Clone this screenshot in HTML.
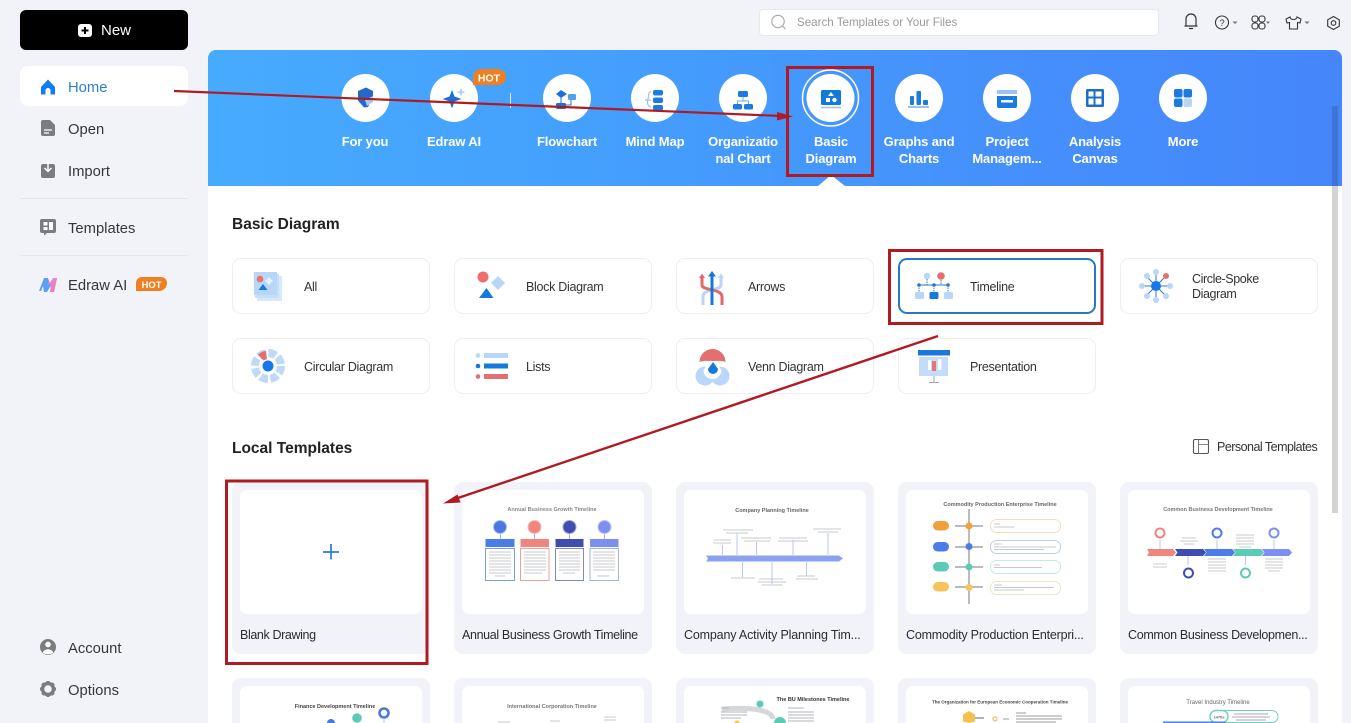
<!DOCTYPE html>
<html lang="en">
<head>
<meta charset="utf-8">
<title>Edraw Home</title>
<style>
html,body{margin:0;padding:0;width:1351px;height:723px;overflow:hidden;background:#f1f3f9;font-family:"Liberation Sans",sans-serif;color:#2b2b30}
*{box-sizing:border-box}
#root{position:relative;width:1351px;height:723px;overflow:hidden;background:#f1f3f9}
.a{position:absolute}
.new{left:20px;top:10px;width:168px;height:40px;background:#000;border-radius:6px;color:#fff;font-size:15px;line-height:41px;padding-left:81px}
.homebg{left:20px;top:66px;width:168px;height:40px;background:#fff;border-radius:8px}
.nav{left:68px;font-size:14.8px;line-height:20px;color:#36363c;white-space:nowrap}
.hr{left:20px;width:168px;height:1px;background:#e4e6ec}
.panel{left:208px;top:50px;width:1134px;height:673px;background:#fff;border-radius:8px 8px 0 0}
.banner{left:208px;top:50px;width:1134px;height:136px;border-radius:8px 8px 0 0;background:linear-gradient(90deg,#47abfd 0%,#449ffd 35%,#4590fc 70%,#4586fb 100%)}
.lbl{width:88px;text-align:center;color:#fff;font-size:13px;font-weight:bold;line-height:17px;top:133px;white-space:nowrap;letter-spacing:-.15px}
.h{left:232px;font-size:15.5px;font-weight:bold;color:#222;line-height:20px;white-space:nowrap}
.c{width:198px;height:56px;background:#fff;border:1px solid #eceef2;border-radius:9px}
.ct{font-size:12.5px;line-height:15px;color:#333;white-space:nowrap;letter-spacing:-.3px}
.t{width:198px;height:172px;background:#f1f3f9;border-radius:9px}
.th{width:182px;height:124px;background:#fff;border-radius:7px}
.t2{width:198px;height:45px;top:678px;background:#f1f3f9;border-radius:9px 9px 0 0}
.th2{width:182px;height:37px;top:686px;background:#fff;border-radius:7px 7px 0 0}
.tl{font-size:12.5px;line-height:16px;color:#2b2b30;white-space:nowrap;top:627px}
.search{left:759px;top:9px;width:400px;height:27px;background:#fff;border:1px solid #e6e8ee;border-radius:4px;font-size:11.6px;line-height:25px;color:#9a9a9f;padding-left:37px}
svg.o{position:absolute;left:0;top:0;width:1351px;height:723px;overflow:hidden}
.soft{filter:blur(.3px)}
</style>
</head>
<body>
<div id="root">
<div class="a new">New</div>
<div class="a homebg"></div>
<div class="a nav" style="top:78px;color:#2f80c8">Home</div>
<div class="a nav" style="top:120px">Open</div>
<div class="a nav" style="top:162px">Import</div>
<div class="a hr" style="top:198px"></div>
<div class="a nav" style="top:219px">Templates</div>
<div class="a hr" style="top:255px"></div>
<div class="a nav" style="top:276px">Edraw AI</div>
<div class="a nav" style="top:639px">Account</div>
<div class="a nav" style="top:681px">Options</div>

<div class="a search">Search Templates or Your Files</div>

<div class="a panel"></div>
<div class="a banner"></div>
<div class="a" style="left:1332px;top:186px;width:6px;height:327px;background:#d3d3d3"></div>
<div class="a" style="left:1332px;top:106px;width:6px;height:80px;background:#3f74d6"></div>

<div class="a lbl" style="left:321px">For you</div>
<div class="a lbl" style="left:410px">Edraw AI</div>
<div class="a lbl" style="left:523px">Flowchart</div>
<div class="a lbl" style="left:611px">Mind Map</div>
<div class="a lbl" style="left:699px">Organizatio<br>nal Chart</div>
<div class="a lbl" style="left:787px">Basic<br>Diagram</div>
<div class="a lbl" style="left:875px">Graphs and<br>Charts</div>
<div class="a lbl" style="left:963px">Project<br>Managem...</div>
<div class="a lbl" style="left:1051px">Analysis<br>Canvas</div>
<div class="a lbl" style="left:1139px">More</div>

<div class="a h" style="top:215px">Basic Diagram</div>
<div class="a c" style="left:232px;top:258px"></div>
<div class="a c" style="left:454px;top:258px"></div>
<div class="a c" style="left:676px;top:258px"></div>
<div class="a c" style="left:898px;top:258px;border:2px solid #2a78c0"></div>
<div class="a c" style="left:1120px;top:258px"></div>
<div class="a c" style="left:232px;top:338px"></div>
<div class="a c" style="left:454px;top:338px"></div>
<div class="a c" style="left:676px;top:338px"></div>
<div class="a c" style="left:898px;top:338px"></div>
<div class="a ct" style="left:304px;top:280px">All</div>
<div class="a ct" style="left:526px;top:280px">Block Diagram</div>
<div class="a ct" style="left:748px;top:280px">Arrows</div>
<div class="a ct" style="left:970px;top:280px">Timeline</div>
<div class="a ct" style="left:1192px;top:272px;letter-spacing:-.4px">Circle-Spoke<br>Diagram</div>
<div class="a ct" style="left:304px;top:360px">Circular Diagram</div>
<div class="a ct" style="left:526px;top:360px">Lists</div>
<div class="a ct" style="left:748px;top:360px">Venn Diagram</div>
<div class="a ct" style="left:970px;top:360px">Presentation</div>

<div class="a h" style="top:439px">Local Templates</div>
<div class="a ct" style="left:1217px;top:440px;letter-spacing:-.52px">Personal Templates</div>

<div class="a t" style="left:232px;top:482px"></div>
<div class="a t" style="left:454px;top:482px"></div>
<div class="a t" style="left:676px;top:482px"></div>
<div class="a t" style="left:898px;top:482px"></div>
<div class="a t" style="left:1120px;top:482px"></div>
<div class="a th" style="left:240px;top:490px"></div>
<div class="a th" style="left:462px;top:490px"></div>
<div class="a th" style="left:684px;top:490px"></div>
<div class="a th" style="left:906px;top:490px"></div>
<div class="a th" style="left:1128px;top:490px"></div>
<div class="a tl" style="left:240px;letter-spacing:-.38px">Blank Drawing</div>
<div class="a tl" style="left:462px;letter-spacing:-.36px">Annual Business Growth Timeline</div>
<div class="a tl" style="left:684px;letter-spacing:-.17px">Company Activity Planning Tim...</div>
<div class="a tl" style="left:906px;letter-spacing:-.2px">Commodity Production Enterpri...</div>
<div class="a tl" style="left:1128px;letter-spacing:-.33px">Common Business Developmen...</div>

<div class="a t2" style="left:232px"></div>
<div class="a t2" style="left:454px"></div>
<div class="a t2" style="left:676px"></div>
<div class="a t2" style="left:898px"></div>
<div class="a t2" style="left:1120px"></div>
<div class="a th2" style="left:240px"></div>
<div class="a th2" style="left:462px"></div>
<div class="a th2" style="left:684px"></div>
<div class="a th2" style="left:906px"></div>
<div class="a th2" style="left:1128px"></div>

<svg class="o" viewBox="0 0 1351 723" xmlns="http://www.w3.org/2000/svg" font-family="Liberation Sans, sans-serif">
<!-- new plus -->
<rect x="78" y="24" width="14" height="13" rx="3" fill="#fff"/>
<path d="M85 27v7M81.500 30.500h7" stroke="#000" stroke-width="2"/>
<!-- sidebar icons -->
<path d="M41 87l7-7.500 7 7.500v7.500h-4.500v-4a2.500 2.500 0 0 0-5 0v4H41z" fill="#0f7ef0"/>
<path d="M41 122a2 2 0 0 1 2-2h7l5 5v9a2 2 0 0 1-2 2H43a2 2 0 0 1-2-2z" fill="#7b7b80"/>
<path d="M44 130h8M44 133h5" stroke="#fff" stroke-width="1.300"/>
<path d="M41 166a2 2 0 0 1 2-2h10a2 2 0 0 1 2 2v10a2 2 0 0 1-2 2H43a2 2 0 0 1-2-2z" fill="#7b7b80"/>
<path d="M48 162v9M44.500 168l3.500 3.500 3.500-3.500" stroke="#fff" stroke-width="1.500" fill="none"/>
<path d="M42 219h12a2 2 0 0 1 2 2v10a2 2 0 0 1-2 2h-7l-3 2.500V233h-2a2 2 0 0 1-2-2v-10a2 2 0 0 1 2-2z" fill="#7b7b80"/>
<path d="M43.500 222h4v3.500h-4zM49 222h4v8h-4v-3.500zM43.500 227h4v3h-4z" fill="#fff"/>
<path d="M39 291l5-13h4l1 7 4-7h4l-3 14h-4l1-7-4 7h-3l-1-6-2 5z" fill="#5aa0f5"/>
<path d="M48 278l1 7 4-7h4l-3 14h-4l1-7" fill="#ef7fc0"/>
<path d="M136 283a6 6 0 0 1 6-6h19a6 6 0 0 1 6 6v0a8 8 0 0 1-8 8h-23z" fill="#f0801f"/>
<text x="151.500" y="288" font-size="9.500" font-weight="bold" fill="#fff" text-anchor="middle">HOT</text>
<circle cx="48" cy="647" r="8" fill="#7b7b80"/>
<circle cx="48" cy="644.500" r="2.800" fill="#fff"/>
<path d="M42.800 652.500a5.300 4 0 0 1 10.400 0a8 8 0 0 1-10.400 0z" fill="#fff"/>
<circle cx="48" cy="689" r="5.500" fill="none" stroke="#7b7b80" stroke-width="3.500"/>
<path d="M48 681v3M48 694v3M40 689h3M53 689h3M42.300 683.300l2.200 2.200M51.500 692.500l2.200 2.200M42.300 694.700l2.200-2.200M51.500 685.500l2.200-2.200" stroke="#7b7b80" stroke-width="3"/>

<!-- top icons -->
<circle cx="778" cy="21.500" r="6.200" fill="none" stroke="#a6a6aa" stroke-width="1.100"/>
<path d="M782.500 26l3 3" stroke="#a6a6aa" stroke-width="1.100"/>
<path d="M1186 26v-7a5 5 0 0 1 10 0v7zM1184.500 26h13M1189 28.500h4" fill="none" stroke="#333" stroke-width="1.200"/>
<circle cx="1222" cy="22.500" r="6.500" fill="none" stroke="#333" stroke-width="1.100"/>
<text x="1222" y="26" font-size="9.500" text-anchor="middle" fill="#333">?</text>
<path d="M1232.500 21.500h5l-2.500 2.500zM1266 21.500h4l-2 2.500zM1304.500 21.500h5l-2.500 2.500z" fill="#777"/>
<g fill="none" stroke="#333" stroke-width="1.100"><rect x="1252" y="16" width="6" height="6" rx="2.500"/><rect x="1259" y="16" width="6" height="6" rx="2.500"/><rect x="1252" y="23" width="6" height="6" rx="2.500"/><rect x="1259" y="23" width="6" height="6" rx="2.500"/>
<path d="M1290 17l-4 2 1 4 2.500-.5V29h8v-6.500l2.500.5 1-4-4-2a3.500 2.500 0 0 1-7 0z"/>
<path d="M1333.500 16.500l5.800 3.300v6.400l-5.800 3.300-5.800-3.300v-6.400z"/><circle cx="1333.500" cy="23" r="2.300"/></g>

<!-- banner circles -->
<g fill="#fff"><circle cx="365.500" cy="98" r="24"/><circle cx="454" cy="98" r="24"/><circle cx="567" cy="98" r="24"/><circle cx="655" cy="98" r="24"/><circle cx="743" cy="98" r="24"/><circle cx="830.500" cy="98" r="24"/><circle cx="919" cy="98" r="24"/><circle cx="1007" cy="98" r="24"/><circle cx="1095" cy="98" r="24"/><circle cx="1183" cy="98" r="24"/></g>
<circle cx="830.500" cy="98" r="28" fill="none" stroke="#fff" stroke-width="1.500"/>
<path d="M818 186l13-11 14 11z" fill="#fff"/>
<path d="M510.500 93v15" stroke="#dbe9ff" stroke-width="1"/>
<path d="M481 69h17a8 8 0 0 1 8 8v0a8 8 0 0 1-8 8h-25v-8a8 8 0 0 1 8-8z" fill="#f0801f"/>
<text x="489" y="81.500" font-size="10.500" font-weight="bold" fill="#fff" text-anchor="middle">HOT</text>
<!-- banner icon glyphs -->
<path d="M358 91l8-3.500 7 3.500v6l-5 10-4 .5-6-7z" fill="#2468c8"/>
<path d="M365 100l8-4v6l-6 4z" fill="#a9c9f5"/>
<path d="M452 90l2.500 6.500 7 2.500-7 2.500-2.500 7-2.500-7-7-2.500 7-2.500z" fill="#1c6fd6"/>
<path d="M461 88l1.200 3 3 1.200-3 1.200-1.200 3-1.200-3-3-1.200 3-1.200z" fill="#b4cdf2"/>
<path d="M561 90l6 4-6 4-5-4z" fill="#1c6fd6"/><rect x="568" y="94" width="8" height="6" rx="1.500" fill="#52a0ea"/><rect x="556" y="103" width="10" height="6" rx="1.500" fill="#1c6fd6"/><path d="M561 98v5M566 105h5v-5" stroke="#1c6fd6" fill="none"/>
<rect x="653" y="90" width="10" height="5.500" rx="2" fill="#1c7be0"/><rect x="653" y="97.500" width="10" height="5.500" rx="2" fill="#1c7be0"/><rect x="653" y="105" width="10" height="5.500" rx="2" fill="#1c7be0"/>
<path d="M651 92c-3 0-2 4-3 7-1 3-1 7 3 8M645 100h6" fill="none" stroke="#9cc3ef" stroke-width="1.200"/>
<rect x="738" y="91" width="10" height="6" rx="1.500" fill="#1c7be0"/><rect x="733" y="104" width="9" height="5.500" rx="1.500" fill="#1c7be0"/><rect x="744" y="104" width="9" height="5.500" rx="1.500" fill="#1c7be0"/><path d="M743 97v4M737.500 104v-3h11v3" fill="none" stroke="#6fa9e6"/>
<rect x="821" y="90" width="20" height="15" rx="1.500" fill="#1479d8"/><path d="M831 92l3 4h-6z" fill="#fff"/><rect x="826" y="98" width="4" height="4" fill="#fff"/><circle cx="834.500" cy="100" r="2.200" fill="#fff"/><path d="M821 107.500h20" stroke="#9cc3ef" stroke-width="1.500"/>
<rect x="910" y="96" width="4" height="9" rx="1" fill="#1c7be0"/><rect x="916.500" y="91" width="4.500" height="14" rx="1" fill="#1c7be0"/><rect x="923" y="100" width="5" height="5" rx="1" fill="#1c7be0"/><path d="M908 107h21" stroke="#9cc3ef" stroke-width="2"/>
<rect x="997" y="90" width="20" height="4" fill="#9cc3ef"/><path d="M997 96h20v10a2 2 0 0 1-2 2h-16a2 2 0 0 1-2-2z" fill="#1c7be0"/><rect x="1001" y="100" width="12" height="2.500" fill="#fff"/>
<rect x="1086" y="89" width="18" height="18" rx="1.500" fill="#1c6fc8"/><path d="M1088.500 91.500h5v5h-5zM1095.500 91.500h6v5h-6zM1088.500 98.500h5v6h-5zM1095.500 98.500h6v6h-6z" fill="#fff"/>
<rect x="1174" y="89" width="8.500" height="8.500" rx="2" fill="#1c7be0"/><rect x="1183.500" y="89" width="8.500" height="8.500" rx="2" fill="#1c7be0"/><rect x="1174" y="98.500" width="8.500" height="8.500" rx="2" fill="#1c7be0"/><rect x="1183.500" y="98.500" width="8.500" height="8.500" rx="2" fill="#b9d6f5"/>

<!-- category icons -->
<rect x="257" y="276" width="25" height="25" fill="#d8e8fb"/><rect x="255" y="274" width="24" height="24" fill="#c5def9"/>
<rect x="254" y="272" width="23" height="23" fill="#b8d6f8"/><circle cx="260" cy="279" r="3.300" fill="#ea7272"/><path d="M269 277l4 4-4 4-4-4z" fill="#e6f1fd"/><path d="M263 284l4.500 6h-9z" fill="#1478dc"/>
<circle cx="483" cy="277" r="5.500" fill="#ee6e6e"/><path d="M498 276l7 7-7 7-7-7z" fill="#b9d6f8"/><path d="M486.500 288l7 10h-14.500z" fill="#1478dc"/>
<path d="M721 278v7c0 6-18 3-18 12v8" fill="none" stroke="#b9d6f8" stroke-width="3"/><path d="M718 278l3-4.500 3 4.500z" fill="#b9d6f8"/>
<path d="M702 278v7c0 6 20 3 20 12v8" fill="none" stroke="#e06a6a" stroke-width="3"/><path d="M699 278l3-4.500 3 4.500z" fill="#e06a6a"/>
<path d="M712 271l4 5.500h-2.500V305h-3V276.500H708z" fill="#1478dc"/>
<circle cx="927" cy="276" r="3.300" fill="#b9d6f8"/><circle cx="941" cy="276" r="3.800" fill="#e56f6f"/><path d="M919 285h29" stroke="#2a78c0"/><path d="M927 279v6M941 280v5M919 285v7M934 285v7M948 285v7" stroke="#2a78c0" stroke-dasharray="1.500 1"/><g fill="#2a78c0"><circle cx="919" cy="285" r="1.800"/><circle cx="934" cy="285" r="1.800"/><circle cx="948" cy="285" r="1.800"/></g><rect x="915" y="292" width="9" height="7" rx="1.500" fill="#b9d6f8"/><rect x="929.500" y="292" width="9" height="7" rx="1.500" fill="#1478dc"/><rect x="944" y="292" width="9" height="7" rx="1.500" fill="#b9d6f8"/>
<g stroke="#2a78c0" stroke-width="1"><path d="M1156 274v24M1144 286h24M1148 278l16 16M1164 278l-16 16"/></g><circle cx="1156" cy="286" r="5" fill="#1478ec"/>
<g fill="#b9d6f8"><circle cx="1156" cy="272" r="3"/><circle cx="1147" cy="276" r="3"/><circle cx="1142" cy="286" r="3"/><circle cx="1170" cy="286" r="3"/><circle cx="1147" cy="296" r="3"/><circle cx="1156" cy="300" r="3"/><circle cx="1166" cy="296" r="3"/></g><circle cx="1166" cy="276" r="3" fill="#e56f6f"/>
<circle cx="268" cy="366" r="13" fill="none" stroke="#c0d9f8" stroke-width="8" stroke-dasharray="7.700 2.510"/><path d="M258 354.500a15 15 0 0 1 8-3.500l1 8-3.500 1.500z" fill="#e56f6f"/><circle cx="268" cy="366" r="5.500" fill="#1478ec"/>
<circle cx="478" cy="355.500" r="2.300" fill="#b9d6f8"/><rect x="484" y="353" width="24" height="5" fill="#b9d6f8"/><circle cx="478" cy="366" r="2.300" fill="#1478dc"/><rect x="484" y="363.500" width="24" height="5" fill="#1478dc"/><circle cx="478" cy="376.500" r="2.300" fill="#e56f6f"/><rect x="484" y="374" width="24" height="5" fill="#e56f6f"/>
<circle cx="705" cy="376" r="9.500" fill="#bad7f9"/><circle cx="720" cy="376" r="9.500" fill="#bad7f9"/>
<path d="M712.500 358l9 12a9 9 0 0 1-9 9 9 9 0 0 1-9-9z" fill="#fff"/>
<path d="M699.500 362a13 13 0 0 1 26 0c-4-1.500-8-1-13-1s-9-.5-13 1z" fill="#e56f6f"/><path d="M713 362l5 7a5 5 0 1 1-10 0z" fill="#1478dc"/>
<rect x="918" y="350" width="32" height="5.500" fill="#1b78d8"/><rect x="919" y="357" width="29" height="19" fill="#c2dcf9"/><rect x="928" y="360" width="3" height="10" fill="#fff"/><rect x="932" y="361" width="4" height="10" fill="#e67676"/><rect x="938" y="359" width="3.500" height="11" fill="#fff"/><path d="M934 376v6M929 382.500h10" stroke="#aaa"/>

<!-- personal templates icon -->
<rect x="1193.500" y="439.500" width="15" height="14" rx="1.500" fill="none" stroke="#555" stroke-width="1.100"/><path d="M1198.500 444.500h10" stroke="#888" stroke-width="1"/><path d="M1198.500 439.500v14" stroke="#777"/>
<!-- blank plus -->
<path d="M331 544v15.500M323 552h16" stroke="#2a7fc4" stroke-width="1.700"/>

<g class="soft">
<!-- thumb 1 -->
<text x="552" y="511" font-size="5.500" font-weight="bold" fill="#888" text-anchor="middle">Annual Business Growth Timeline</text>
<g stroke-width="1">
<path d="M500.500 534v5M534.500 534v5M569.500 534v5M604.500 534v5" stroke="#9fb4e8"/>
<circle cx="500" cy="527" r="6.500" fill="#4a77e0" stroke="#a8c0f2"/><circle cx="534.500" cy="527" r="6.500" fill="#f0847e" stroke="#f8bdb8"/><circle cx="569.500" cy="527" r="6.500" fill="#3f4db0" stroke="#9aa2dc"/><circle cx="604.500" cy="527" r="6.500" fill="#7d8ff0" stroke="#bcc5f6"/>
<rect x="485.500" y="539" width="29" height="8" fill="#4a7de8"/><rect x="520.500" y="539" width="28.500" height="8" fill="#f0847e"/><rect x="555.500" y="539" width="28" height="8" fill="#3f4db0"/><rect x="590" y="539" width="28.500" height="8" fill="#7d8ff0"/>
<rect x="485.500" y="548.500" width="29" height="32" fill="#fff" stroke="#7d9fd8"/><rect x="520.500" y="548.500" width="28.500" height="32" fill="#fff" stroke="#f0a09a"/><rect x="555.500" y="548.500" width="28" height="32" fill="#fff" stroke="#7f88c4"/><rect x="590" y="548.500" width="28.500" height="32" fill="#fff" stroke="#a0b0e8"/>
</g>
<path d="M489 552h22M489 555h22M489 558h22M489 561h22M489 564h22M489 567h22M489 570h22M489 573h22M495 576h10M524 552h22M524 555h22M524 558h22M524 561h22M524 564h22M524 567h22M524 570h22M524 573h18M559 552h21M559 555h21M559 558h21M559 561h21M559 564h21M559 567h21M559 570h21M563 573h12M593 552h22M593 555h22M593 558h22M593 561h22M593 564h22M593 567h22M593 570h22M597 576h12" stroke="#c6c8ce" stroke-width="1"/>
<!-- thumb 2 -->
<text x="772" y="512" font-size="5.500" font-weight="bold" fill="#666" text-anchor="middle">Company Planning Timeline</text>
<path d="M706 555.500h133l4 3-4 3H706l2-3z" fill="#8ba3ee"/>
<path d="M722.500 545v10M737 533v22M756.500 542v13M793 540v15M828 533v22M742.500 562v15M772 562v22M806.500 562v14" stroke="#b9c7ee" stroke-width="1"/>
<path d="M714 540h17M713 543h18M723 530h30M726 533h22M741 538h30M744 541h26M779 538h28M778 541h30M813 529h28M818 532h20M731 578h24M759 579h24M758 582h28M762 585h20M797 576h18M796 579h22" stroke="#c6c8ce" stroke-width="1"/>
<!-- thumb 3 -->
<text x="1000" y="506" font-size="5.500" font-weight="bold" fill="#666" text-anchor="middle">Commodity Production Enterprise Timeline</text>
<path d="M969 509v95" stroke="#777" stroke-width="1"/>
<path d="M955 526h28M955 547h28M955 567h28M955 587h28" stroke="#777" stroke-width="1"/>
<rect x="933" y="521" width="16" height="9.500" rx="4.700" fill="#f0a03a"/><rect x="933" y="542" width="16" height="9.500" rx="4.700" fill="#4a7de8"/><rect x="933" y="562" width="16" height="9.500" rx="4.700" fill="#5ccab5"/><rect x="933" y="582" width="16" height="9.500" rx="4.700" fill="#f4c55c"/>
<circle cx="969" cy="526" r="3.500" fill="#f0a03a"/><circle cx="969" cy="546.500" r="3.500" fill="#4a7de8"/><circle cx="969" cy="567" r="3.500" fill="#5ccab5"/><circle cx="969" cy="587.500" r="3.500" fill="#f4c55c"/>
<g fill="#fff" stroke-width="1"><rect x="990.500" y="519.500" width="70" height="13" rx="6" stroke="#f4dcc0"/><rect x="990.500" y="540.500" width="70" height="13" rx="6" stroke="#bccdf2"/><rect x="990.500" y="560.500" width="70" height="13" rx="6" stroke="#c0ece3"/><rect x="990.500" y="581.500" width="70" height="13" rx="6" stroke="#f4e4c8"/></g>
<path d="M994 524h6M994 527h20M994 544h8M994 547h62M994 549.500h50M994 565h6M994 567.500h48M994 585h8M994 587.500h60M994 590h30" stroke="#c6c8ce" stroke-width="1"/>
<!-- thumb 4 -->
<text x="1218" y="511" font-size="5.500" font-weight="bold" fill="#777" text-anchor="middle">Common Business Development Timeline</text>
<path d="M1147 549h26l3 3.500-3 3.500h-26l2-3.500z" fill="#f0847e"/><path d="M1175 549h28l3 3.500-3 3.500h-28l2.500-3.500z" fill="#3f4db0"/><path d="M1204 549h28l3 3.500-3 3.500h-28l2.500-3.500z" fill="#4a7de8"/><path d="M1233 549h28l3 3.500-3 3.500h-28l2.500-3.500z" fill="#5ccab5"/><path d="M1262 549h27l3 3.500-3 3.500h-27l2.500-3.500z" fill="#7d8ff0"/>
<path d="M1160 540v9M1188 556v9M1217 540v9M1245.500 556v9M1274 540v9" stroke="#b9c7ee"/>
<g fill="#fff" stroke-width="2"><circle cx="1160" cy="533" r="4.500" stroke="#f0847e"/><circle cx="1188.500" cy="573" r="4.500" stroke="#3f4db0"/><circle cx="1217" cy="533" r="4.500" stroke="#4a7de8"/><circle cx="1245.500" cy="573" r="4.500" stroke="#5ccab5"/><circle cx="1274" cy="533" r="4.500" stroke="#7d8ff0"/></g>
<path d="M1182 538h14M1180 541h18M1184 544h10M1236 535h18M1236 538h18M1236 541h18M1236 544h18M1239 547h12M1153 564h14M1153 567h14M1208 559h18M1208 562h18M1208 565h18M1208 568h18M1208 571h18M1265 559h18M1265 562h18M1265 565h18M1265 568h18M1268 571h12" stroke="#c6c8ce" stroke-width="1"/>

<!-- row 2 -->
<text x="335" y="708" font-size="5.500" font-weight="bold" fill="#444" text-anchor="middle">Finance Development Timeline</text>
<circle cx="384" cy="713" r="4.500" fill="#fff" stroke="#4a77e0" stroke-width="2.500"/><path d="M384 718v5" stroke="#a8c0f2"/>
<circle cx="357" cy="718" r="4.800" fill="#5ccab5"/><path d="M327 723a4 4 0 0 1 8 0z" fill="#4a77e0"/>
<text x="552" y="708" font-size="5.500" font-weight="bold" fill="#777" text-anchor="middle">International Corporation Timeline</text>
<path d="M498 722h12M550 721h10M604 717h12M604 720h12" stroke="#c6c8ce"/>
<text x="813" y="701" font-size="5.500" font-weight="bold" fill="#333" text-anchor="middle">The BU Milestones Timeline</text>
<path d="M722 709c30-2 50 1 51 10" fill="none" stroke="#d5d7db" stroke-width="5"/><circle cx="760" cy="704" r="3.500" fill="#5ccab5"/><path d="M774 723a6 6 0 0 1 12 0z" fill="#5ccab5"/><path d="M734.500 723a2.500 2.500 0 0 1 5 0z" fill="#f4c55c"/>
<path d="M721 708h8M721 712h26M721 715h26M721 718h20M788 708h16M788 712h26M788 715h26M788 718h26M788 721h26" stroke="#b3b5bc"/>
<text x="1000" y="703.500" font-size="4.500" font-weight="bold" fill="#444" text-anchor="middle">The Organization for European Economic Cooperation Timeline</text>
<path d="M969 711l6 3.500v7l-6 1.500-6-1.500v-7z" fill="#f4c04e"/><path d="M975 718h9" stroke="#666"/><circle cx="995" cy="719" r="2" fill="#fff" stroke="#f0b040"/>
<path d="M1003 719h6M1016 713h10M1016 716h46M1016 719h46M1016 722h40" stroke="#9a9ca2"/>
<text x="1218" y="704" font-size="6" fill="#666" text-anchor="middle">Travel Industry Timeline</text>
<rect x="1210" y="710.500" width="68" height="12" rx="6" fill="none" stroke="#6fd0c0"/><rect x="1210" y="710.500" width="18" height="12" rx="6" fill="none" stroke="#6fd0c0" stroke-width="1.400"/>
<text x="1219" y="718.500" font-size="4" font-weight="bold" fill="#666" text-anchor="middle">1470s</text>
<path d="M1234 714h34M1232 717h38M1236 720h30" stroke="#aaa"/>
<rect x="1163" y="721.500" width="62" height="1.500" fill="#4a7de8"/>
</g>

<!-- annotation rectangles and arrows -->
<g fill="none" stroke="#b01b22" stroke-width="3"><rect x="787.500" y="67.500" width="85" height="108"/><rect x="889.500" y="250.500" width="212.500" height="73"/><rect x="226.500" y="481" width="200.500" height="182.500"/></g>
<path d="M174 91L782 116" stroke="#b01b22" stroke-width="2.200"/><path d="M793 116.500l-16-4.500v8.500z" fill="#b01b22"/>
<path d="M938 336L455 499" stroke="#b01b22" stroke-width="2.400"/><path d="M443 503.500l14.500-9 3 8z" fill="#b01b22"/>
</svg>
</div>
</body>
</html>
